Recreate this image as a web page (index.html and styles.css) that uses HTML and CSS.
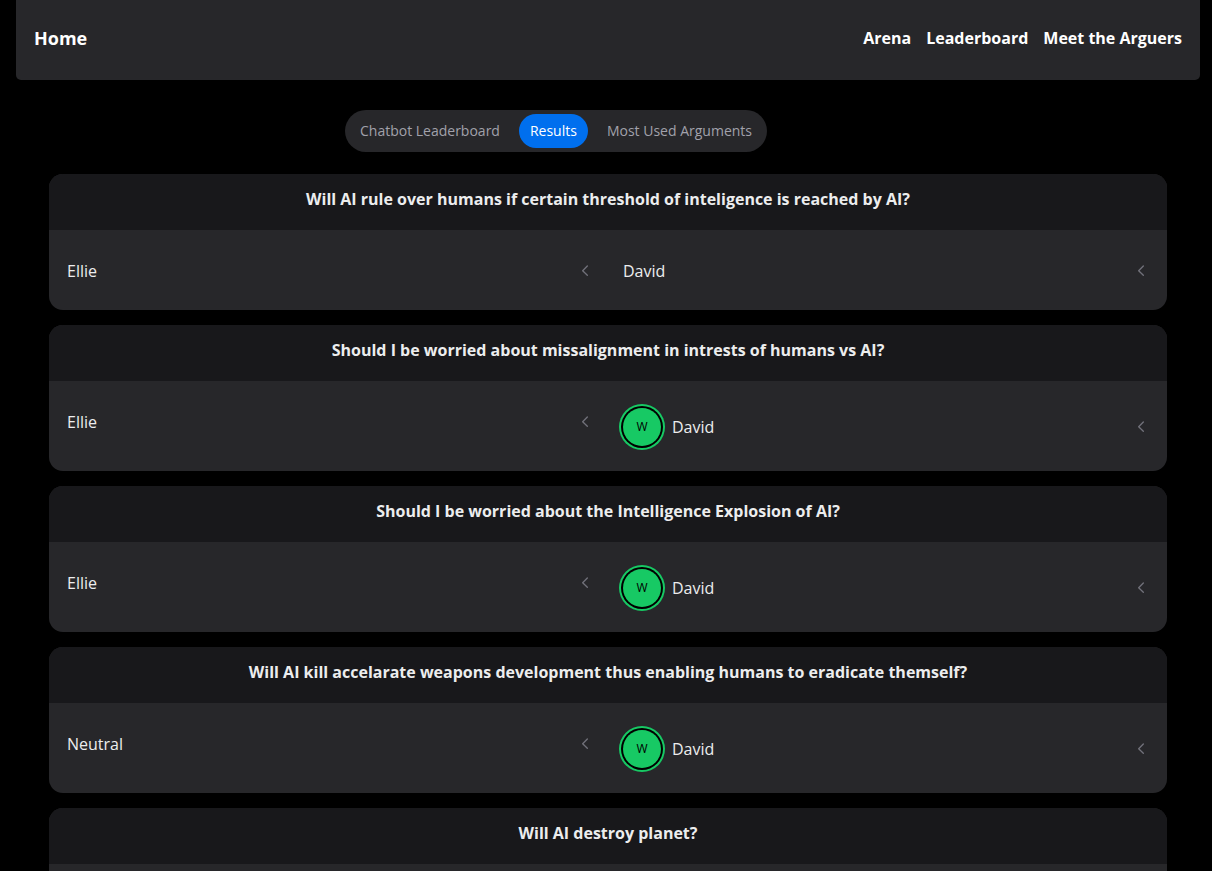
FILE: index.html
```
<!DOCTYPE html>
<html lang="en">
<head>
    <meta charset="UTF-8">
    <meta name="viewport" content="width=device-width, initial-scale=1.0">
    <title>Results</title>
    <link rel="stylesheet" href="styles.css">
</head>
<body>
    <svg class="sprite" aria-hidden="true">
        <symbol id="chevron" viewBox="0 0 24 24">
            <path d="M15.5 18.5l-7-7 7-7" fill="none" stroke="currentColor" stroke-width="2" stroke-linecap="round" stroke-linejoin="round"/>
        </symbol>
    </svg>
    <nav class="navbar">
        <a class="brand" href="#">Home</a>
        <div class="nav-links">
            <a href="#">Arena</a>
            <a href="#">Leaderboard</a>
            <a href="#">Meet the Arguers</a>
        </div>
    </nav>
    <div class="tabs-row">
        <div class="tabs" role="tablist">
            <button class="tab" type="button" role="tab" aria-selected="false">Chatbot Leaderboard</button>
            <button class="tab active" type="button" role="tab" aria-selected="true">Results</button>
            <button class="tab" type="button" role="tab" aria-selected="false">Most Used Arguments</button>
        </div>
    </div>
    <main class="results">
        <section class="card">
            <h2>Will AI rule over humans if certain threshold of inteligence is reached by AI?</h2>
            <div class="card-body">
                <button class="arguer" type="button"><span>Ellie</span><svg class="chevron"><use href="#chevron"/></svg></button>
                <button class="arguer" type="button"><span>David</span><svg class="chevron"><use href="#chevron"/></svg></button>
            </div>
        </section>
        <section class="card">
            <h2>Should I be worried about missalignment in intrests of humans vs AI?</h2>
            <div class="card-body">
                <button class="arguer" type="button"><span>Ellie</span><svg class="chevron"><use href="#chevron"/></svg></button>
                <button class="arguer" type="button"><span class="avatar">W</span><span>David</span><svg class="chevron"><use href="#chevron"/></svg></button>
            </div>
        </section>
        <section class="card">
            <h2>Should I be worried about the Intelligence Explosion of AI?</h2>
            <div class="card-body">
                <button class="arguer" type="button"><span>Ellie</span><svg class="chevron"><use href="#chevron"/></svg></button>
                <button class="arguer" type="button"><span class="avatar">W</span><span>David</span><svg class="chevron"><use href="#chevron"/></svg></button>
            </div>
        </section>
        <section class="card">
            <h2>Will AI kill accelarate weapons development thus enabling humans to eradicate themself?</h2>
            <div class="card-body">
                <button class="arguer" type="button"><span>Neutral</span><svg class="chevron"><use href="#chevron"/></svg></button>
                <button class="arguer" type="button"><span class="avatar">W</span><span>David</span><svg class="chevron"><use href="#chevron"/></svg></button>
            </div>
        </section>
        <section class="card">
            <h2>Will AI destroy planet?</h2>
            <div class="card-body"></div>
        </section>
    </main>
</body>
</html>
```
FILE: styles.css
```
html {
    scrollbar-width: none;
}
body {
    margin: 0;
    background-color: #000000;
    color: #ecedee;
    font-family: 'Segoe UI', 'Open Sans', sans-serif;
    font-size: 16px;
}
button {
    border: none;
    background: none;
    color: inherit;
    font-family: inherit;
    cursor: pointer;
}
.sprite {
    display: none;
}
.navbar {
    display: flex;
    justify-content: space-between;
    margin: 0 12px 0 16px;
    padding: 24px 18px 28px;
    background-color: #27272a;
    border-radius: 0 0 5px 5px;
    line-height: 28px;
}
.navbar a {
    color: #ffffff;
    font-weight: bold;
    text-decoration: none;
}
.navbar .brand {
    font-size: 18px;
}
.nav-links {
    display: flex;
    gap: 15px;
}
.tabs-row {
    display: flex;
    justify-content: center;
    padding: 30px 100px 22px 0;
}
.tabs {
    display: flex;
    gap: 8px;
    padding: 4px;
    background-color: #27272a;
    border-radius: 21px;
}
.tab {
    padding: 0 11px;
    border-radius: 17px;
    color: #a1a1aa;
    font-size: 14px;
    line-height: 34px;
}
.tab.active {
    background-color: #006fee;
    color: #ffffff;
}
.results {
    display: flex;
    flex-direction: column;
    gap: 15px;
    margin: 0 45px 0 49px;
}
.card {
    background-color: #27272a;
    border-radius: 14px;
    overflow: hidden;
}
.card h2 {
    margin: 0;
    padding: 12px 12px 18px;
    background-color: #18181b;
    font-size: 16px;
    line-height: 26px;
    text-align: center;
}
.card-body {
    display: grid;
    grid-template-columns: 1fr 1fr;
    align-items: start;
    padding: 27px 3px 25px;
}
.arguer {
    display: flex;
    align-items: center;
    gap: 11px;
    padding: 0 15px;
    font-size: 16px;
    line-height: 28px;
    text-align: left;
}
.avatar {
    width: 38px;
    height: 38px;
    border-radius: 50%;
    background-color: #17c964;
    box-shadow: 0 0 0 2px #000000, 0 0 0 4px #17c964;
    color: #000000;
    font-size: 12px;
    line-height: 38px;
    text-align: center;
}
.chevron {
    width: 16px;
    height: 16px;
    margin-left: auto;
    color: #71717a;
}
```
